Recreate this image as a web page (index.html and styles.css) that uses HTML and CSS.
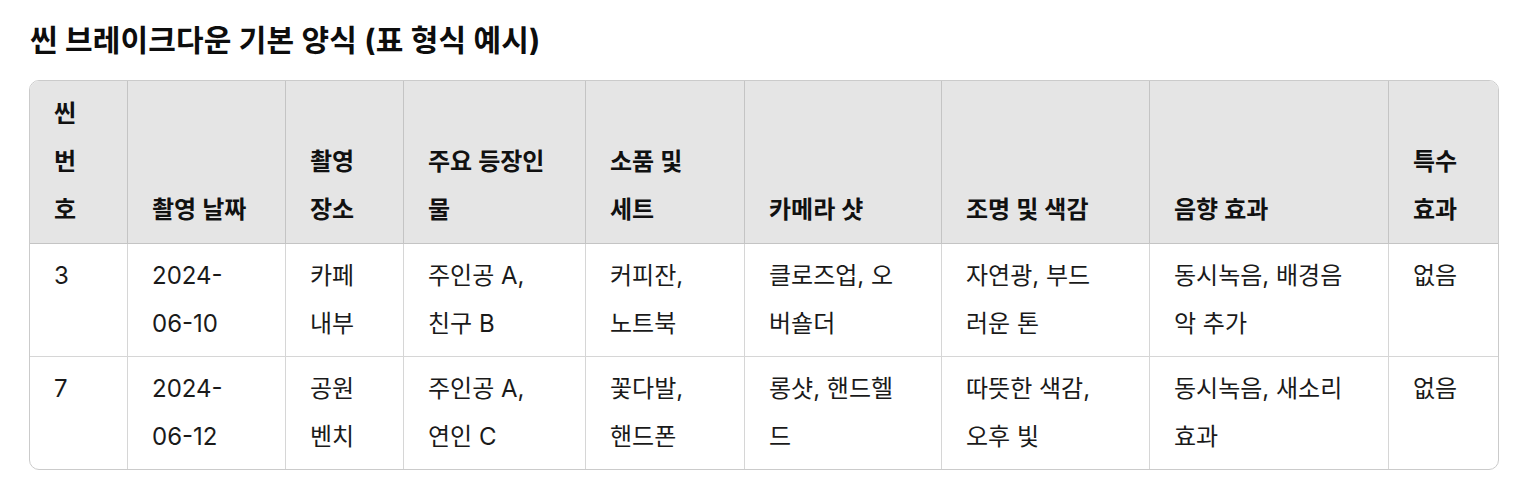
FILE: index.html
```html
<!DOCTYPE html>
<html lang="ko">
<head>
<meta charset="utf-8">
<title>씬 브레이크다운 기본 양식</title>
<link rel="stylesheet" href="styles.css">
</head>
<body>
<main class="page">
  <h1 class="title">씬 브레이크다운 기본 양식 (표 형식 예시)</h1>
  <div class="table-wrap">
    <table class="breakdown">
      <colgroup>
        <col class="c1"><col class="c2"><col class="c3"><col class="c4"><col class="c5"><col class="c6"><col class="c7"><col class="c8"><col class="c9">
      </colgroup>
      <thead>
        <tr>
          <th>씬 번호</th>
          <th>촬영 날짜</th>
          <th>촬영 장소</th>
          <th>주요 등장인물</th>
          <th>소품 및 세트</th>
          <th>카메라 샷</th>
          <th>조명 및 색감</th>
          <th>음향 효과</th>
          <th>특수 효과</th>
        </tr>
      </thead>
      <tbody>
        <tr>
          <td>3</td>
          <td>2024-06-10</td>
          <td>카페 내부</td>
          <td>주인공 A, 친구 B</td>
          <td>커피잔, 노트북</td>
          <td>클로즈업, 오버숄더</td>
          <td>자연광, 부드러운 톤</td>
          <td>동시녹음, 배경음악 추가</td>
          <td>없음</td>
        </tr>
        <tr>
          <td>7</td>
          <td>2024-06-12</td>
          <td>공원 벤치</td>
          <td>주인공 A, 연인 C</td>
          <td>꽃다발, 핸드폰</td>
          <td>롱샷, 핸드헬드</td>
          <td>따뜻한 색감, 오후 빛</td>
          <td>동시녹음, 새소리 효과</td>
          <td>없음</td>
        </tr>
      </tbody>
    </table>
  </div>
</main>
</body>
</html>
```
FILE: styles.css
```css
html, body {
  margin: 0;
  padding: 0;
  background: #ffffff;
}

body {
  font-family: Inter, "Noto Sans CJK KR", sans-serif;
  color: #1a1a1a;
}

.page {
  padding: 18px 33px 0 29px;
}

.title {
  margin: 0 0 17px 0;
  padding-left: 1px;
  font-size: 30px;
  line-height: 45px;
  letter-spacing: 0.15px;
  font-weight: 700;
  color: #0d0d0d;
}

.table-wrap {
  width: 1470px;
  box-sizing: border-box;
  border: 1px solid #cbcbcb;
  border-radius: 10px;
  overflow: hidden;
}

.breakdown {
  width: 1468px;
  table-layout: fixed;
  border-collapse: separate;
  border-spacing: 0;
  font-size: 24px;
  line-height: 48px;
}

.c1 { width: 97px; }
.c2 { width: 158px; }
.c3 { width: 118px; }
.c4 { width: 182px; }
.c5 { width: 159px; }
.c6 { width: 197px; }
.c7 { width: 208px; }
.c8 { width: 239px; }
.c9 { width: 110px; }

.breakdown th,
.breakdown td {
  text-align: left;
  border-left: 1px solid #d6d6d6;
  padding: 8px 38px 8px 24px;
}

.breakdown th:first-child,
.breakdown td:first-child {
  border-left: none;
}

.breakdown th {
  background: #e5e5e5;
  font-weight: 600;
  color: #111111;
  vertical-align: bottom;
  padding-top: 9px;
  padding-bottom: 9px;
  border-left-color: #c4c4c4;
  border-bottom: 1px solid #c4c4c4;
}

.breakdown td {
  vertical-align: top;
  font-weight: 400;
  color: #1a1a1a;
}

.breakdown tbody tr + tr td {
  border-top: 1px solid #d6d6d6;
}
```
